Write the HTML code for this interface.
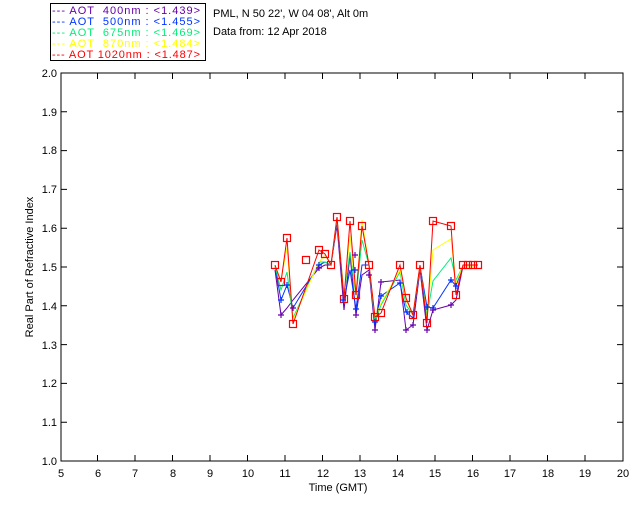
<!DOCTYPE html>
<html><head><style>
body{margin:0;background:#fff;width:640px;height:512px;overflow:hidden}
svg{display:block}
text{font-family:"Liberation Sans",sans-serif;font-size:11px}
</style></head><body>
<svg width="640" height="512" viewBox="0 0 640 512">
<rect x="50.5" y="3.5" width="155" height="57" fill="none" stroke="#000"/>
<g font-size="10.5">
<text x="52" y="14" fill="#6600aa" textLength="148" lengthAdjust="spacing">--- AOT &#160;400nm : &lt;1.439&gt;</text>
<text x="52" y="25" fill="#0033ff" textLength="148" lengthAdjust="spacing">--- AOT &#160;500nm : &lt;1.455&gt;</text>
<text x="52" y="36" fill="#00ee77" textLength="148" lengthAdjust="spacing">--- AOT &#160;675nm : &lt;1.469&gt;</text>
<text x="52" y="47" fill="#ffff00" textLength="148" lengthAdjust="spacing">--- AOT &#160;870nm : &lt;1.484&gt;</text>
<text x="52" y="58" fill="#ff0000" textLength="148" lengthAdjust="spacing">--- AOT 1020nm : &lt;1.487&gt;</text>
</g>
<text x="213" y="17">PML, N 50 22', W 04 08', Alt 0m</text>
<text x="213" y="35">Data from: 12 Apr 2018</text>
<g stroke="#000" fill="none">
<rect x="61" y="73" width="562" height="388"/>
<path d="M97.5 461v-6M135 461v-6M172.5 461v-6M210 461v-6M247.5 461v-6M285 461v-6M322.5 461v-6M360 461v-6M397.5 461v-6M435 461v-6M472.5 461v-6M510 461v-6M547.5 461v-6M585 461v-6
M97.5 73v6M135 73v6M172.5 73v6M210 73v6M247.5 73v6M285 73v6M322.5 73v6M360 73v6M397.5 73v6M435 73v6M472.5 73v6M510 73v6M547.5 73v6M585 73v6
M61 422.2h6M61 383.4h6M61 344.6h6M61 305.8h6M61 267h6M61 228.2h6M61 189.4h6M61 150.6h6M61 111.8h6
M623 422.2h-6M623 383.4h-6M623 344.6h-6M623 305.8h-6M623 267h-6M623 228.2h-6M623 189.4h-6M623 150.6h-6M623 111.8h-6"/>
</g>
<g font-size="10.5" text-anchor="end">
<text x="57" y="465">1.0</text><text x="57" y="426">1.1</text><text x="57" y="387">1.2</text><text x="57" y="349">1.3</text><text x="57" y="310">1.4</text><text x="57" y="271">1.5</text><text x="57" y="232">1.6</text><text x="57" y="193">1.7</text><text x="57" y="154">1.8</text><text x="57" y="116">1.9</text><text x="57" y="77">2.0</text>
</g>
<g font-size="10.5" text-anchor="middle">
<text x="61" y="477">5</text><text x="98" y="477">6</text><text x="135" y="477">7</text><text x="173" y="477">8</text><text x="210" y="477">9</text><text x="248" y="477">10</text><text x="285" y="477">11</text><text x="323" y="477">12</text><text x="360" y="477">13</text><text x="398" y="477">14</text><text x="435" y="477">15</text><text x="473" y="477">16</text><text x="510" y="477">17</text><text x="548" y="477">18</text><text x="585" y="477">19</text><text x="623" y="477">20</text>
<text x="338" y="491">Time (GMT)</text>
</g>
<text font-size="10.5" transform="translate(33 267) rotate(-90)" text-anchor="middle">Real Part of Refractive Index</text>
<g fill="none" stroke-width="1">
<polyline stroke="#6600aa" points="275,270 281,315 287,308 293,300 319,268 325,265 331,265 337,225 344,310 350,255 356,315 362,275 369,270 375,330 381,282 400,280 406,330 413,325 420,270 427,330 433,310 451,305 456,300 463,266 478,266"/>
<polyline stroke="#0033ff" points="275,266 281,300 287,285 293,308 319,265 325,262 331,265 337,219 344,300 350,270 356,309 362,265 369,265 375,322 381,296 400,283 406,312 413,318 420,266 427,307 433,308 451,280 456,286 463,266 478,266"/>
<polyline stroke="#00ee77" points="275,266 281,290 287,272 293,318 319,262 325,262 331,265 337,218 344,295 350,252 356,297 362,240 369,265 375,322 381,305 400,272 406,305 413,315 420,266 427,315 433,281 451,258 456,280 463,266 478,266"/>
<polyline stroke="#ffff00" points="275,266 281,280 287,248 293,320 319,262 325,255 331,265 337,218 344,297 350,235 356,297 362,220 369,265 375,318 381,303 400,270 406,300 413,315 420,266 427,320 433,250 451,239 456,283 463,266 478,266"/>
<polyline stroke="#ff0000" points="275,265 281,282 287,238 293,324 319,250 325,254 331,265 337,217 344,299 350,221 356,295 362,226 369,265 375,317 381,313 400,265 406,298 413,315 420,265 427,323 433,221 451,226 456,295 463,265 478,265"/>
</g>
<g fill="none" stroke="#ff0000" stroke-width="1.2">
<rect x="271.5" y="261.5" width="7" height="7"/><rect x="277.5" y="278.5" width="7" height="7"/><rect x="283.5" y="234.5" width="7" height="7"/><rect x="289.5" y="320.5" width="7" height="7"/><rect x="302.5" y="256.5" width="7" height="7"/><rect x="315.5" y="246.5" width="7" height="7"/><rect x="321.5" y="250.5" width="7" height="7"/><rect x="327.5" y="261.5" width="7" height="7"/><rect x="333.5" y="213.5" width="7" height="7"/><rect x="340.5" y="295.5" width="7" height="7"/><rect x="346.5" y="217.5" width="7" height="7"/><rect x="352.5" y="291.5" width="7" height="7"/><rect x="358.5" y="222.5" width="7" height="7"/><rect x="365.5" y="261.5" width="7" height="7"/><rect x="371.5" y="313.5" width="7" height="7"/><rect x="377.5" y="309.5" width="7" height="7"/><rect x="396.5" y="261.5" width="7" height="7"/><rect x="402.5" y="294.5" width="7" height="7"/><rect x="409.5" y="311.5" width="7" height="7"/><rect x="416.5" y="261.5" width="7" height="7"/><rect x="423.5" y="319.5" width="7" height="7"/><rect x="429.5" y="217.5" width="7" height="7"/><rect x="447.5" y="222.5" width="7" height="7"/><rect x="452.5" y="291.5" width="7" height="7"/><rect x="459.5" y="261.5" width="7" height="7"/><rect x="464.5" y="261.5" width="7" height="7"/><rect x="469.5" y="261.5" width="7" height="7"/><rect x="474.5" y="261.5" width="7" height="7"/>
</g>
<g stroke="#0033ff" stroke-width="1.2">
<path d="M278 300h6M281 297v6M284 285h6M287 282v6M316 265h6M319 262v6M340 300h6M343 297v6M352 270h6M355 267v6M353 309h6M356 306v6M372 322h6M375 319v6M378 296h6M381 293v6M397 283h6M400 280v6M404 312h6M407 309v6M424 307h6M427 304v6M430 308h6M433 305v6M448 280h6M451 277v6M453 286h6M456 283v6"/>
</g>
<g stroke="#6600aa" stroke-width="1.2">
<path d="M278 315h6M281 312v6M290 308h6M293 305v6M316 268h6M319 265v6M352 255h6M355 252v6M353 315h6M356 312v6M366 275h6M369 272v6M372 330h6M375 327v6M378 282h6M381 279v6M403 330h6M406 327v6M410 325h6M413 322v6M424 330h6M427 327v6M430 310h6M433 307v6M448 305h6M451 302v6"/>
</g>
</svg>
</body></html>
